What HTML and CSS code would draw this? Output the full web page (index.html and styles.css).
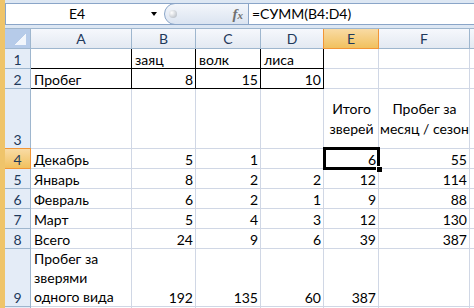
FILE: index.html
```html
<!DOCTYPE html>
<html lang="ru">
<head>
    <meta charset="UTF-8">
    <meta name="viewport" content="width=device-width, initial-scale=1.0">
    <title>Пробег зверей</title>
    <link rel="stylesheet" href="styles.css">
</head>
<body>
    <div class="edge"></div>

    <div class="app">
        <!-- name box + formula bar -->
        <div class="toolbar">
            <div class="formula-bar">
                <div class="name-box">
                    <span class="name">E4</span>
                    <span class="drop"></span>
                </div>
                <div class="fx-button">
                    <span class="knob"></span>
                    <span class="fx"><i>f</i><i class="fx-x">x</i></span>
                </div>
                <div class="formula">=СУММ(B4:D4)</div>
            </div>
        </div>

        <div class="sheet">
            <!-- column headers -->
            <div class="corner"></div>
            <div class="col-head">A</div>
            <div class="col-head">B</div>
            <div class="col-head">C</div>
            <div class="col-head">D</div>
            <div class="col-head active">E</div>
            <div class="col-head">F</div>
            <div class="col-head"></div>

            <!-- 1 -->
            <div class="row-head">1</div>
            <div class="cell line-r line-b"></div>
            <div class="cell line-r line-b">заяц</div>
            <div class="cell line-r line-b">волк</div>
            <div class="cell line-r line-b">лиса</div>
            <div class="cell"></div>
            <div class="cell"></div>
            <div class="cell"></div>

            <!-- 2 -->
            <div class="row-head">2</div>
            <div class="cell line-r line-b">Пробег</div>
            <div class="cell num line-r line-b">8</div>
            <div class="cell num line-r line-b">15</div>
            <div class="cell num line-r line-b">10</div>
            <div class="cell"></div>
            <div class="cell"></div>
            <div class="cell"></div>

            <!-- 3 -->
            <div class="row-head">3</div>
            <div class="cell"></div>
            <div class="cell"></div>
            <div class="cell"></div>
            <div class="cell"></div>
            <div class="cell wrap">Итого<br>зверей</div>
            <div class="cell wrap">Пробег за<br>месяц / сезон</div>
            <div class="cell"></div>

            <!-- 4 -->
            <div class="row-head active">4</div>
            <div class="cell">Декабрь</div>
            <div class="cell num">5</div>
            <div class="cell num">1</div>
            <div class="cell num"></div>
            <div class="cell num selected">6</div>
            <div class="cell num">55</div>
            <div class="cell"></div>

            <!-- 5 -->
            <div class="row-head">5</div>
            <div class="cell">Январь</div>
            <div class="cell num">8</div>
            <div class="cell num">2</div>
            <div class="cell num">2</div>
            <div class="cell num">12</div>
            <div class="cell num">114</div>
            <div class="cell"></div>

            <!-- 6 -->
            <div class="row-head">6</div>
            <div class="cell">Февраль</div>
            <div class="cell num">6</div>
            <div class="cell num">2</div>
            <div class="cell num">1</div>
            <div class="cell num">9</div>
            <div class="cell num">88</div>
            <div class="cell"></div>

            <!-- 7 -->
            <div class="row-head">7</div>
            <div class="cell">Март</div>
            <div class="cell num">5</div>
            <div class="cell num">4</div>
            <div class="cell num">3</div>
            <div class="cell num">12</div>
            <div class="cell num">130</div>
            <div class="cell"></div>

            <!-- 8 -->
            <div class="row-head">8</div>
            <div class="cell">Всего</div>
            <div class="cell num">24</div>
            <div class="cell num">9</div>
            <div class="cell num">6</div>
            <div class="cell num">39</div>
            <div class="cell num">387</div>
            <div class="cell"></div>

            <!-- 9 -->
            <div class="row-head">9</div>
            <div class="cell multi">Пробег за<br>зверями<br>одного вида</div>
            <div class="cell num">192</div>
            <div class="cell num">135</div>
            <div class="cell num">60</div>
            <div class="cell num">387</div>
            <div class="cell"></div>
            <div class="cell"></div>

            <!-- trailing row, only its top edge shows -->
            <div class="row-head"></div>
            <div class="cell"></div>
            <div class="cell"></div>
            <div class="cell"></div>
            <div class="cell"></div>
            <div class="cell"></div>
            <div class="cell"></div>
            <div class="cell"></div>
        </div>
    </div>
</body>
</html>
```

FILE: styles.css
```css
:root {
    --grid-color: #d0d7e5;
    --head-border: #9eb6ce;
    --head-text: #1e395b;
    --bar-border: #8aa5c8;
    --sel-orange: #f29536;
}

body {
    margin: 0;
    height: 308px;
    overflow: hidden;
    display: flex;
    font-family: 'Lato', 'Open Sans', sans-serif;
    font-size: 14px;
    color: #000;
    background-color: #fff;
}

.edge {
    flex: none;
    width: 5px;
    background-color: #efc46a;
}

.app {
    flex: 1;
    min-width: 0;
    height: 308px;
    overflow: hidden;
    display: flex;
    flex-direction: column;
}

/* formula bar */

.toolbar {
    padding: 3px 0;
    background-color: #dde7f3;
}

.formula-bar {
    display: flex;
    height: 20px;
    border: 1px solid var(--bar-border);
    border-right: none;
    background-color: #fff;
}

.name-box {
    width: 158px;
    display: flex;
    align-items: center;
}

.name {
    width: 142px;
    text-align: center;
    line-height: 20px;
}

.drop {
    margin-left: 3px;
    width: 0;
    height: 0;
    border-left: 3.5px solid transparent;
    border-right: 3.5px solid transparent;
    border-top: 4px solid #000;
}

.fx-button {
    width: 85px;
    box-sizing: border-box;
    margin: -1px 0;
    border: 1px solid var(--bar-border);
    border-radius: 11px 0 0 11px;
    background: linear-gradient(#f3f6fb, #dbe4f1);
    display: flex;
    align-items: center;
    padding: 0 5px 0 4px;
}

.knob {
    width: 8px;
    height: 8px;
    border-radius: 50%;
    background: radial-gradient(circle at 35% 35%, #ffffff, #c3c8cf 70%, #a9afb8);
}

.fx {
    margin-left: auto;
    font-family: 'Liberation Serif', serif;
    font-weight: bold;
    font-size: 15px;
    color: #707070;
    line-height: 20px;
}

.fx-x {
    font-size: 11px;
}

.formula {
    padding-left: 3px;
    line-height: 20px;
    white-space: nowrap;
}

/* grid */

.sheet {
    flex: 1;
    min-height: 0;
    display: grid;
    grid-template-columns: 26px 101px 64px 65px 63px 55px 91px 1fr;
    grid-template-rows: 20px 20px 20px 60px repeat(5, 20px) 58px 20px;
    border-top: 1px solid var(--head-border);
}

.sheet > div {
    box-sizing: border-box;
    min-width: 0;
}

.corner {
    border-right: 1px solid var(--head-border);
    border-bottom: 1px solid var(--head-border);
    background: linear-gradient(to bottom right, transparent 50%, #f2f6fc 50%) no-repeat right 4px bottom 3px / 11px 12px,
                #b6cbe9;
}

.col-head,
.row-head {
    display: flex;
    justify-content: center;
    color: var(--head-text);
    border-right: 1px solid var(--head-border);
    border-bottom: 1px solid var(--head-border);
}

.col-head {
    align-items: center;
    background: linear-gradient(#f6f8fc, #e3e9f2);
}

.row-head {
    align-items: flex-end;
    line-height: 17px;
    background-color: #e4ecf7;
}

.col-head.active,
.row-head.active {
    background: linear-gradient(#f9dba4, #f1c15f);
    border-color: var(--sel-orange);
}

.col-head.active {
    box-shadow: -1px 0 0 var(--sel-orange);
}

.row-head.active {
    box-shadow: 0 -1px 0 var(--sel-orange);
}

.cell {
    display: flex;
    align-items: flex-end;
    padding: 0 2px 0 3px;
    line-height: 17px;
    white-space: nowrap;
    overflow: hidden;
    border-right: 1px solid var(--grid-color);
    border-bottom: 1px solid var(--grid-color);
}

.num {
    justify-content: flex-end;
}

.wrap {
    align-items: center;
    justify-content: center;
    text-align: center;
    line-height: 20px;
}

.multi {
    line-height: 19px;
}

.line-r {
    border-right-color: #000;
}

.line-b {
    border-bottom-color: #000;
}

/* active cell frame and fill handle */

.selected {
    position: relative;
    overflow: visible;
}

.selected::before {
    content: '';
    position: absolute;
    top: -2px;
    left: -1px;
    right: -2px;
    bottom: -2px;
    border: 3px solid #000;
}

.selected::after {
    content: '';
    position: absolute;
    right: -4px;
    bottom: -4px;
    width: 5px;
    height: 5px;
    background-color: #000;
    border-left: 1px solid #fff;
    border-top: 1px solid #fff;
}
```
